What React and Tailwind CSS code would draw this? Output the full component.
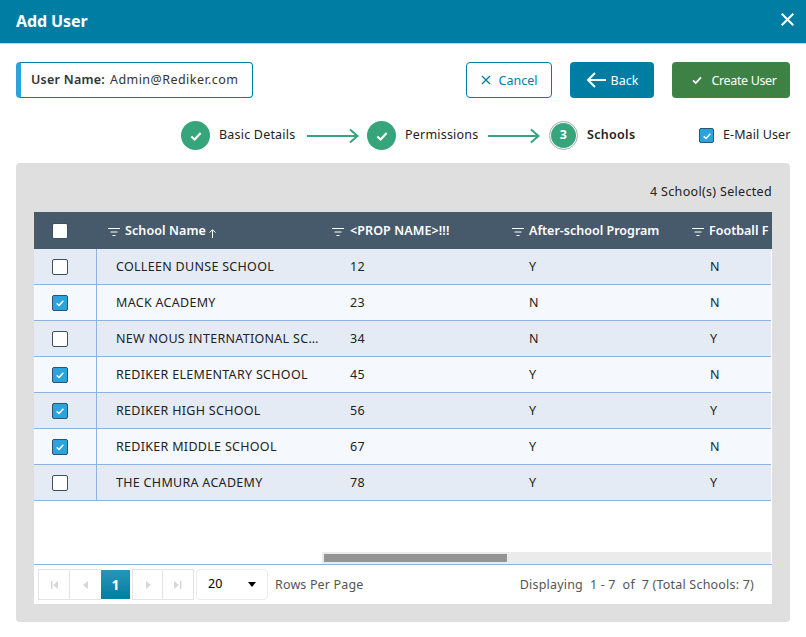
import React from "react";

function Check({ className }) {
  return (
    <svg viewBox="0 0 12 12" className={className} fill="none" stroke="currentColor" strokeWidth="1.8">
      <path d="M2 6.4 4.8 9 10 3.4" />
    </svg>
  );
}

function Box({ checked, small }) {
  const size = small ? "h-[15px] w-[15px]" : "h-[16px] w-[16px]";
  if (checked)
    return (
      <span className={"flex items-center justify-center rounded-[2px] border border-[#34526b] bg-[#2ba3dc] text-white " + size}>
        <Check className="h-[10px] w-[10px]" />
      </span>
    );
  return <span className={"block rounded-[2px] border border-[#3c4f63] bg-white " + size} />;
}

function Arrow() {
  return (
    <svg width="54" height="16" viewBox="0 0 54 16" fill="none" stroke="#36a57c" strokeWidth="2">
      <path d="M1 8H51M44 1.5 51.5 8 44 14.5" />
    </svg>
  );
}

function FilterIcon() {
  return (
    <svg width="12" height="12" viewBox="0 0 12 12" stroke="#fff" strokeWidth="1" className="shrink-0">
      <path d="M0 2.5H12M2.5 6H9.5M4.5 9.5H7.5" />
    </svg>
  );
}

function Done() {
  return (
    <span className="flex h-[29px] w-[29px] items-center justify-center rounded-full bg-[#36a57c] text-white">
      <Check className="h-[14px] w-[14px]" />
    </span>
  );
}

const rows = [
  ["COLLEEN DUNSE SCHOOL", "12", "Y", "N", false],
  ["MACK ACADEMY", "23", "N", "N", true],
  ["NEW NOUS INTERNATIONAL SCHOOL", "34", "N", "Y", false],
  ["REDIKER ELEMENTARY SCHOOL", "45", "Y", "N", true],
  ["REDIKER HIGH SCHOOL", "56", "Y", "Y", true],
  ["REDIKER MIDDLE SCHOOL", "67", "Y", "N", true],
  ["THE CHMURA ACADEMY", "78", "Y", "Y", false],
];

function PageBtn({ d, w = "w-[31px]" }) {
  return (
    <span className={"flex h-full items-center justify-center border-r border-[#e4e4e4] last:border-r-0 " + w}>
      <svg width="8" height="8" viewBox="0 0 8 8" fill="#d8d8d8"><path d={d} /></svg>
    </span>
  );
}

export default function App() {
  return (
    <div className="h-[637px] w-[806px] overflow-hidden bg-white font-['Noto_Sans',sans-serif] text-[12.5px] text-[#222]">
      <header className="flex h-[44px] items-center justify-between border-b border-[#c8d4da] bg-[#007da3] pl-[16px] pr-[12px] text-white">
        <h1 className="mb-[2px] text-[16px] font-bold tracking-[-0.1px]">Add User</h1>
        <svg width="13" height="13" viewBox="0 0 13 13" stroke="#fff" strokeWidth="2" className="mb-[5px]"><path d="M.7.7 12.3 12.3M12.3.7.7 12.3" /></svg>
      </header>

      <div className="flex items-center px-[16px] pt-[18px]">
        <div className="flex h-[36px] w-[237px] items-center rounded-[4px] border border-[#007da3] border-l-[5px] border-l-[#2ba3dc] pl-[10px] pt-[1px] tracking-[0.3px] text-[#333]">
          <span className="mr-[5px] font-semibold tracking-[0.25px]">User Name:</span>
          <span className="tracking-[0.45px]">Admin@Rediker.com</span>
        </div>
        <button className="ml-auto flex h-[36px] w-[86px] items-center justify-center gap-[8px] rounded-[4px] border border-[#007da3] bg-white pt-[2px] text-[#007da3]">
          <svg width="10" height="10" viewBox="0 0 10 10" stroke="currentColor" strokeWidth="1.3" className="-mt-[2px]"><path d="M1 1 9 9M9 1 1 9" /></svg>
          Cancel
        </button>
        <button className="ml-[18px] flex h-[36px] w-[84px] items-center justify-center gap-[5px] rounded-[4px] bg-[#007da3] pt-[2px] text-white">
          <svg width="20" height="16" viewBox="0 0 20 16" fill="none" stroke="#fff" strokeWidth="2" className="-mt-[2px]"><path d="M20 8H2M9 1 2 8l7 7" /></svg>
          Back
        </button>
        <button className="ml-[18px] flex h-[36px] w-[118px] items-center justify-center gap-[8px] rounded-[4px] bg-[#3d8244] pl-[6px] pt-[2px] tracking-[-0.35px] text-white">
          <Check className="-mt-[2px] h-[12px] w-[12px]" />
          Create User
        </button>
      </div>

      <div className="mt-[23px] flex h-[29px] items-center pl-[181px] tracking-[0.2px]">
        <Done />
        <span className="ml-[9px] w-[78px]">Basic Details</span>
        <span className="ml-[9px] flex"><Arrow /></span>
        <span className="ml-[7px]"><Done /></span>
        <span className="ml-[9px] w-[73px]">Permissions</span>
        <span className="ml-[9px] flex"><Arrow /></span>
        <span className="ml-[8px] flex h-[29px] w-[29px] items-center justify-center rounded-full border border-[#a9a9a9] bg-white">
          <span className="flex h-[25px] w-[25px] items-center justify-center rounded-full bg-[#36a57c] font-bold text-white">3</span>
        </span>
        <span className="ml-[9px] w-[50px] font-semibold tracking-[0.3px]">Schools</span>
        <span className="ml-[62px] flex items-center gap-[9px]">
          <Box checked small />
          <span className="tracking-[0.1px]">E-Mail User</span>
        </span>
      </div>

      <section className="mx-[16px] mt-[13px] h-[459px] rounded-[4px] bg-[#dfdfdf] px-[18px] pt-[18px]">
        <div className="h-[31px] pt-[1px] text-right leading-[20px] tracking-[0.32px]">4 School(s) Selected</div>
        <div className="flex h-[392px] flex-col bg-white">
          <div className="flex h-[37px] items-center bg-[#475a6b] pt-[2px] font-semibold text-white">
            <div className="-mt-[2px] flex w-[52px] justify-center pl-0"><Box /></div>
            <div className="flex w-[236px] items-center gap-[5px] pl-[22px]"><FilterIcon />
              <span className="tracking-[0.1px]">School Name</span>
              <svg width="7" height="9" viewBox="0 0 7 9" fill="none" stroke="#fff" strokeWidth="1" className="-ml-[2px] mt-[3px]"><path d="M3.5 9V1M.5 3.5 3.5.8l3 2.7" /></svg>
            </div>
            <div className="flex w-[180px] items-center gap-[6px] pl-[10px] tracking-[0.1px]"><FilterIcon />&lt;PROP NAME&gt;!!!</div>
            <div className="flex w-[180px] items-center gap-[5px] whitespace-nowrap pl-[10px]"><FilterIcon />After-school Program</div>
            <div className="flex min-w-0 flex-1 items-center gap-[5px] whitespace-nowrap pl-[10px]"><FilterIcon />Football F</div>
          </div>
          {rows.map((r, i) => (
            <div key={r[0]} className={"mr-[1px] flex h-[36px] items-center border-b border-[#8db4df] tracking-[0.3px] " + (i % 2 ? "bg-[#f5f9fd]" : "bg-[#e4ebf5]")}>
              <div className="flex h-full w-[63px] items-center border-r border-[#8db4df] pl-[18px]"><Box checked={r[4]} /></div>
              <div className="w-[225px] truncate pl-[19px] pr-[2px] pt-[2px]">{r[0]}</div>
              <div className="w-[180px] pl-[28px] pt-[2px]">{r[1]}</div>
              <div className="w-[180px] pl-[27px] pt-[2px]">{r[2]}</div>
              <div className="flex-1 pl-[28px] pt-[2px]">{r[3]}</div>
            </div>
          ))}
          <div className="ml-[288px] mr-[1px] mt-auto flex h-[12px] bg-[#ebebeb] py-[2px] pl-[2px]">
            <span className="h-full w-[183px] bg-[#949494]" />
          </div>
          <div className="flex h-[40px] items-center border-t border-[#8db4df] pl-[4px] pr-[18px]">
            <div className="flex h-[31px] items-stretch">
              <div className="flex h-full items-center border border-[#e4e4e4] border-r-0">
                <PageBtn d="M1 0h1.5v8H1zM8 0v8L3 4z" w="w-[31px]" />
                <PageBtn d="M6 0v8L1 4z" w="w-[31px]" />
              </div>
              <span className="flex h-[29px] w-[29px] items-center justify-center self-center bg-gradient-to-b from-[#2596b7] to-[#007da3] text-[14px] font-bold text-white">1</span>
              <div className="ml-[2px] flex h-full items-center border border-[#e4e4e4]">
                <PageBtn d="M2 0v8l5-4z" w="w-[30px]" />
                <PageBtn d="M0 0v8l5-4zM6 0h1.5v8H6z" w="w-[30px]" />
              </div>
            </div>
            <div className="ml-[2px] flex h-[31px] w-[72px] items-center justify-between rounded-[4px] border border-[#ececec] pl-[11px] pr-[10px] text-black">
              20
              <svg width="10" height="6" viewBox="0 0 10 6"><path d="M1 0h8L5 5z" fill="#000" /></svg>
            </div>
            <span className="ml-[7px] pt-[2px] tracking-[0.15px] text-[#555]">Rows Per Page</span>
            <span className="ml-auto pt-[1px] tracking-[0.2px] text-[#555]">Displaying&nbsp; 1 - 7 &nbsp;of&nbsp; 7 (Total Schools: 7)</span>
          </div>
        </div>
      </section>
    </div>
  );
}
